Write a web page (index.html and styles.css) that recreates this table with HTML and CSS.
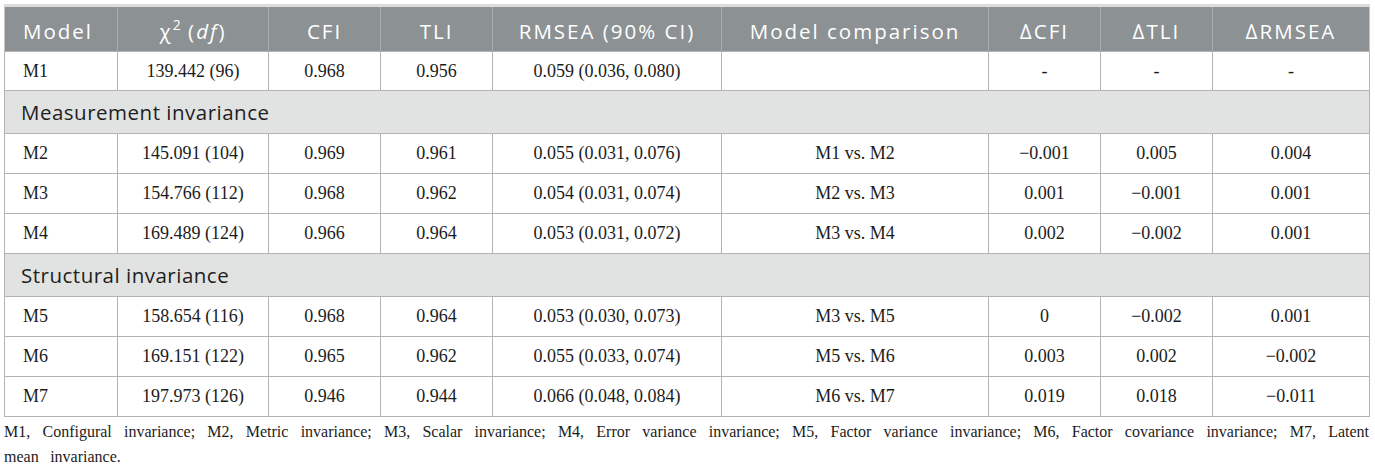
FILE: index.html
```html
<!DOCTYPE html>
<html lang="en">
<head>
<meta charset="utf-8">
<title>Model fit table</title>
<link rel="stylesheet" href="styles.css">
</head>
<body>
<div class="wrap">
<table class="fit">
  <colgroup>
    <col class="c-model"><col class="c-chi"><col class="c-cfi"><col class="c-tli"><col class="c-rmsea"><col class="c-comp"><col class="c-dcfi"><col class="c-dtli"><col class="c-drmsea">
  </colgroup>
  <thead>
    <tr>
      <th class="left">Model</th>
      <th>χ<sup>2</sup> (<i>df</i>)</th>
      <th>CFI</th>
      <th>TLI</th>
      <th>RMSEA (90% CI)</th>
      <th>Model comparison</th>
      <th>∆CFI</th>
      <th>∆TLI</th>
      <th>∆RMSEA</th>
    </tr>
  </thead>
  <tbody>
    <tr class="r1">
      <td class="left">M1</td><td>139.442 (96)</td><td>0.968</td><td>0.956</td><td>0.059 (0.036, 0.080)</td><td></td><td>-</td><td>-</td><td>-</td>
    </tr>
    <tr class="section"><td colspan="9">Measurement invariance</td></tr>
    <tr>
      <td class="left">M2</td><td>145.091 (104)</td><td>0.969</td><td>0.961</td><td>0.055 (0.031, 0.076)</td><td>M1 vs. M2</td><td>−0.001</td><td>0.005</td><td>0.004</td>
    </tr>
    <tr>
      <td class="left">M3</td><td>154.766 (112)</td><td>0.968</td><td>0.962</td><td>0.054 (0.031, 0.074)</td><td>M2 vs. M3</td><td>0.001</td><td>−0.001</td><td>0.001</td>
    </tr>
    <tr>
      <td class="left">M4</td><td>169.489 (124)</td><td>0.966</td><td>0.964</td><td>0.053 (0.031, 0.072)</td><td>M3 vs. M4</td><td>0.002</td><td>−0.002</td><td>0.001</td>
    </tr>
    <tr class="section"><td colspan="9">Structural invariance</td></tr>
    <tr>
      <td class="left">M5</td><td>158.654 (116)</td><td>0.968</td><td>0.964</td><td>0.053 (0.030, 0.073)</td><td>M3 vs. M5</td><td>0</td><td>−0.002</td><td>0.001</td>
    </tr>
    <tr>
      <td class="left">M6</td><td>169.151 (122)</td><td>0.965</td><td>0.962</td><td>0.055 (0.033, 0.074)</td><td>M5 vs. M6</td><td>0.003</td><td>0.002</td><td>−0.002</td>
    </tr>
    <tr class="last">
      <td class="left">M7</td><td>197.973 (126)</td><td>0.946</td><td>0.944</td><td>0.066 (0.048, 0.084)</td><td>M6 vs. M7</td><td>0.019</td><td>0.018</td><td>−0.011</td>
    </tr>
  </tbody>
</table>
<p class="note">M1, Configural invariance; M2, Metric invariance; M3, Scalar invariance; M4, Error variance invariance; M5, Factor variance invariance; M6, Factor covariance invariance; M7, Latent mean invariance.</p>
</div>
</body>
</html>
```
FILE: styles.css
```css
html, body {
  margin: 0;
  padding: 0;
  background: #ffffff;
}

body {
  padding: 4px 6px 0 4px;
}

.wrap {
  width: 1365px;
}

.fit {
  width: 1365px;
  border-collapse: collapse;
  table-layout: fixed;
  border: 1px solid #c4c4c4;
  font-family: "Liberation Serif", "Times New Roman", serif;
  font-size: 18px;
  color: #1c1c1c;
}

.c-model { width: 113px; }
.c-chi { width: 151px; }
.c-cfi { width: 112px; }
.c-tli { width: 112px; }
.c-rmsea { width: 229px; }
.c-comp { width: 267px; }
.c-dcfi { width: 112px; }
.c-dtli { width: 112px; }
.c-drmsea { width: 157px; }

.fit th {
  background: #8c9194;
  color: #ffffff;
  font-family: "Open Sans", "Noto Sans", sans-serif;
  font-weight: 400;
  font-size: 20.5px;
  letter-spacing: 2px;
  height: 46px;
  padding: 4px 0 0 0;
  box-sizing: border-box;
  text-align: center;
  border-left: 1px solid #a9adb0;
  border-top: 3px solid #dcdcdc;
  vertical-align: middle;
}

.fit th:first-child {
  border-left: none;
}

.fit th sup {
  font-size: 14px;
  vertical-align: 9px;
  line-height: 0;
  letter-spacing: 0;
}

.fit td {
  height: 39px;
  padding: 0;
  text-align: center;
  vertical-align: middle;
  border: 1px solid #b3b3b3;
}

.fit .r1 td {
  height: 38px;
}

.fit .left {
  text-align: left;
  padding-left: 18px;
}

.fit .section td {
  background: #e1e3e2;
  font-family: "Open Sans", "Noto Sans", sans-serif;
  font-size: 20.5px;
  letter-spacing: 0.5px;
  color: #1e1e1e;
  text-align: left;
  padding-left: 16px;
  height: 42px;
}

.note {
  margin: 2px 0 0 0;
  font-family: "Liberation Serif", "Times New Roman", serif;
  font-size: 16px;
  line-height: 25px;
  word-spacing: 7.5px;
  color: #1c1c1c;
  text-align: justify;
}
```
